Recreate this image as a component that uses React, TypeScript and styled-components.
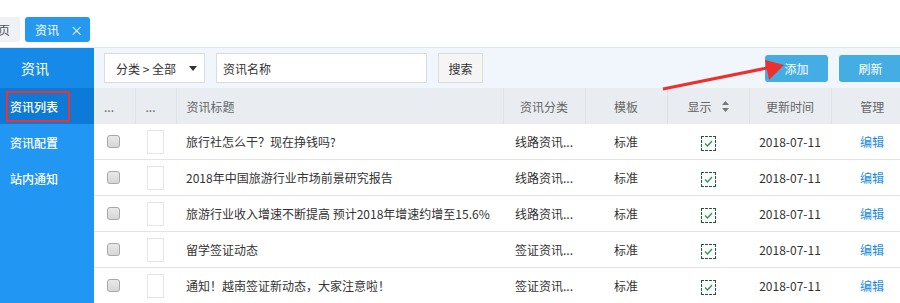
import styled, { createGlobalStyle } from "styled-components";

const GlobalStyle = createGlobalStyle`
  html, body {
    margin: 0;
    padding: 0;
    overflow: hidden;
    background: #fff;
  }
  body {
    font-family: "Microsoft YaHei", "Noto Sans CJK SC", "Noto Sans", sans-serif;
    font-size: 12px;
    color: #333;
  }
`;

const Page = styled.div`
  position: relative;
  width: 913px;
  height: 303px;
  overflow: hidden;
`;

const TopBar = styled.div`
  height: 48px;
  display: flex;
  align-items: flex-start;
  padding-top: 17px;
  box-sizing: border-box;
  border-bottom: 1px solid #dfe7f1;
`;

const TabStrip = styled.div`
  display: flex;
  gap: 5px;
  margin-left: -24px;
`;

const Tab = styled.div<{ active?: boolean }>`
  height: 25px;
  display: flex;
  align-items: center;
  gap: 11px;
  padding: 0 ${(p) => (p.active ? "7px" : "10px")} 0 10px;
  border-radius: 3px;
  background: ${(p) => (p.active ? "#2599ef" : "#eef1f6")};
  color: ${(p) => (p.active ? "#fff" : "#555")};
  font-size: 12px;
`;

const Close = styled.span`
  font-size: 13px;
  line-height: 1;
  opacity: 0.9;
`;

const Main = styled.div`
  display: flex;
  height: 255px;
`;

const Sidebar = styled.div`
  width: 94px;
  flex-shrink: 0;
  background: #2196f3;
  display: flex;
  flex-direction: column;
`;

const SideHead = styled.div`
  height: 40px;
  display: flex;
  align-items: center;
  padding-left: 21px;
  background: #168ae9;
  color: #fff;
  font-size: 14px;
`;

const SideItem = styled.div<{ active?: boolean }>`
  height: 36px;
  display: flex;
  align-items: center;
  padding-left: 6px;
  background: ${(p) => (p.active ? "#0c7ad6" : "transparent")};
  color: #fff;
  font-size: 12px;
  font-weight: 500;
`;

const Marked = styled.span<{ marked?: boolean }>`
  display: flex;
  align-items: center;
  height: 27px;
  padding: 0 10px 0 2px;
  border: 2px solid ${(p) => (p.marked ? "#f2302c" : "transparent")};
`;

const Content = styled.div`
  flex: 1;
  display: flex;
  flex-direction: column;
`;

const Toolbar = styled.div`
  height: 40px;
  flex-shrink: 0;
  background: #f0f6fc;
  display: flex;
  align-items: center;
  padding: 0 11px 0 10px;
  gap: 11px;
`;

const Dropdown = styled.div`
  width: 101px;
  height: 30px;
  box-sizing: border-box;
  background: #fff;
  border: 1px solid #dcdcdc;
  display: flex;
  align-items: center;
  justify-content: space-between;
  padding: 0 7px 0 11px;
`;

const Caret = styled.span`
  width: 0;
  height: 0;
  border-left: 4px solid transparent;
  border-right: 4px solid transparent;
  border-top: 5px solid #333;
`;

const Input = styled.div`
  width: 211px;
  height: 30px;
  box-sizing: border-box;
  background: #fff;
  border: 1px solid #dcdcdc;
  display: flex;
  align-items: center;
  padding-left: 6px;
`;

const PlainButton = styled.div`
  width: 45px;
  height: 30px;
  box-sizing: border-box;
  background: #f5f5f5;
  border: 1px solid #dcdcdc;
  display: flex;
  align-items: center;
  justify-content: center;
`;

const Spacer = styled.div`
  flex: 1;
`;

const BlueButton = styled.div`
  width: 63px;
  height: 27px;
  border-radius: 3px;
  background: #43ade4;
  color: #fff;
  display: flex;
  align-items: center;
  justify-content: center;
`;

const Table = styled.table`
  width: 819px;
  table-layout: fixed;
  border-collapse: collapse;
`;

const Th = styled.th<{ align?: string }>`
  height: 36px;
  padding: 0 0 0 ${(p) => (p.align === "left" ? "10px" : "0")};
  background: #e9edf2;
  color: #666;
  font-weight: normal;
  text-align: ${(p) => p.align || "center"};
  border-left: 1px solid #dde2e8;
  white-space: nowrap;
  &:first-child {
    border-left: none;
  }
`;

const Td = styled.td<{ align?: string; pad?: number }>`
  height: 35px;
  padding: 0 0 0 ${(p) => (p.pad !== undefined ? p.pad : 0)}px;
  text-align: ${(p) => p.align || "center"};
  border-bottom: 1px solid #e4e4e4;
  white-space: nowrap;
  overflow: hidden;
  vertical-align: middle;
`;

const Check = styled.span`
  display: block;
  width: 13px;
  height: 13px;
  box-sizing: border-box;
  border: 1px solid #a8a8a8;
  border-radius: 3px;
  background: linear-gradient(#e9e9e9, #d6d6d6);
`;

const Thumb = styled.span`
  display: block;
  width: 17px;
  height: 24px;
  box-sizing: border-box;
  border: 1px solid #e6e6e6;
  background: #fff;
`;

const Shown = styled.span`
  display: inline-flex;
  width: 15px;
  height: 15px;
  box-sizing: border-box;
  border: 1px dashed #1d5c36;
  align-items: center;
  justify-content: center;
  vertical-align: middle;
`;

const SortHead = styled.span`
  display: inline-flex;
  align-items: center;
  gap: 10px;
`;

const Link = styled.span`
  color: #1a8ddc;
`;

const Overlay = styled.svg`
  position: absolute;
  left: 0;
  top: 0;
  pointer-events: none;
`;

const rows = [
  { title: "旅行社怎么干？现在挣钱吗?", cat: "线路资讯..." },
  { title: "2018年中国旅游行业市场前景研究报告", cat: "线路资讯..." },
  { title: "旅游行业收入增速不断提高 预计2018年增速约增至15.6%", cat: "线路资讯..." },
  { title: "留学签证动态", cat: "签证资讯..." },
  { title: "通知！越南签证新动态，大家注意啦！", cat: "签证资讯..." },
];

const colWidths = [41, 41, 327, 82, 82, 82, 82, 82];

function SortIcon() {
  return (
    <svg width="7" height="11" viewBox="0 0 7 11">
      <path d="M3.5 0 L7 4 L0 4 Z" fill="#777" />
      <path d="M0 7 L7 7 L3.5 11 Z" fill="#777" />
    </svg>
  );
}

function App() {
  return (
    <Page>
      <GlobalStyle />
      <TopBar>
        <TabStrip>
          <Tab>首页</Tab>
          <Tab active>
            资讯<Close>×</Close>
          </Tab>
        </TabStrip>
      </TopBar>
      <Main>
        <Sidebar>
          <SideHead>资讯</SideHead>
          <SideItem active>
            <Marked marked>资讯列表</Marked>
          </SideItem>
          <SideItem>
            <Marked>资讯配置</Marked>
          </SideItem>
          <SideItem>
            <Marked>站内通知</Marked>
          </SideItem>
        </Sidebar>
        <Content>
          <Toolbar>
            <Dropdown>
              分类 &gt; 全部 <Caret />
            </Dropdown>
            <Input>资讯名称</Input>
            <PlainButton>搜索</PlainButton>
            <Spacer />
            <BlueButton>添加</BlueButton>
            <BlueButton>刷新</BlueButton>
          </Toolbar>
          <Table>
            <colgroup>
              {colWidths.map((w, i) => (
                <col key={i} style={{ width: w }} />
              ))}
            </colgroup>
            <thead>
              <tr>
                <Th align="left">...</Th>
                <Th align="left">...</Th>
                <Th align="left">资讯标题</Th>
                <Th>资讯分类</Th>
                <Th>模板</Th>
                <Th>
                  <SortHead>
                    显示 <SortIcon />
                  </SortHead>
                </Th>
                <Th>更新时间</Th>
                <Th>管理</Th>
              </tr>
            </thead>
            <tbody>
              {rows.map((r) => (
                <tr key={r.title}>
                  <Td align="left" pad={13}>
                    <Check />
                  </Td>
                  <Td align="left" pad={12}>
                    <Thumb />
                  </Td>
                  <Td align="left" pad={10}>
                    {r.title}
                  </Td>
                  <Td align="left" pad={12}>
                    {r.cat}
                  </Td>
                  <Td>标准</Td>
                  <Td>
                    <Shown>
                      <svg width="9" height="7" viewBox="0 0 9 7">
                        <path d="M1 3.5 L3.5 6 L8 1" stroke="#2e9a55" strokeWidth="1.4" fill="none" />
                      </svg>
                    </Shown>
                  </Td>
                  <Td>2018-07-11</Td>
                  <Td>
                    <Link>编辑</Link>
                  </Td>
                </tr>
              ))}
            </tbody>
          </Table>
        </Content>
      </Main>
      <Overlay width="913" height="303" viewBox="0 0 913 303">
        <line x1="663" y1="89" x2="772" y2="67" stroke="#ee2f2c" strokeWidth="3" />
        <polygon points="784,65 765,60 769,80" fill="#ee2f2c" />
      </Overlay>
    </Page>
  );
}

export default App;
